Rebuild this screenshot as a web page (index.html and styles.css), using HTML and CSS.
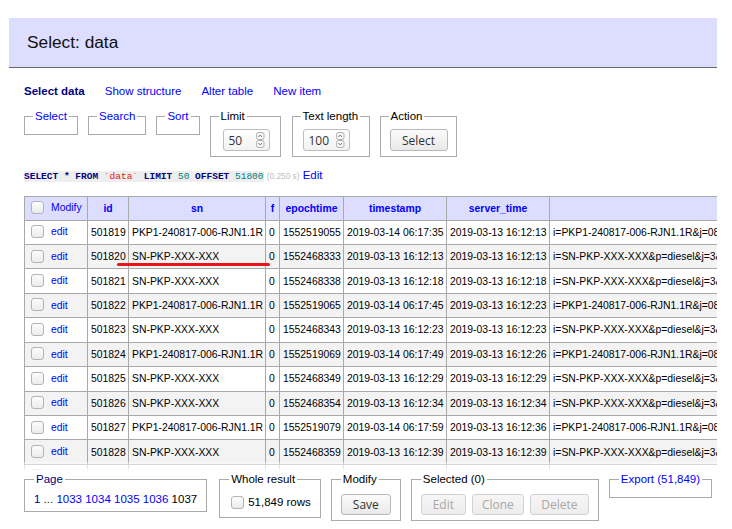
FILE: index.html
```html
<!DOCTYPE html>
<html lang="en">
<head>
<meta charset="utf-8">
<title>Select: data</title>
<link rel="stylesheet" href="styles.css">
</head>
<body>
<h2 class="title">Select: data</h2>
<div class="content">
  <p class="links"><a class="cur" href="#">Select data</a><a href="#">Show structure</a><a href="#">Alter table</a><a href="#">New item</a></p>
  <form class="opts">
    <fieldset class="fs"><legend><a href="#">Select</a></legend></fieldset>
    <fieldset class="fs"><legend><a href="#">Search</a></legend></fieldset>
    <fieldset class="fs"><legend><a href="#">Sort</a></legend></fieldset>
    <fieldset class="fs"><legend>Limit</legend>
      <div class="num"><span>50</span><svg class="spin" width="9" height="16" viewBox="0 0 9 16"><rect x="0.5" y="0.5" width="7.5" height="7" rx="2" class="sb"/><rect x="0.5" y="8.5" width="7.5" height="7" rx="2" class="sb"/><path d="M2.5 5 L4.25 3 L6 5" class="sc"/><path d="M2.5 11 L4.25 13 L6 11" class="sc"/></svg></div>
    </fieldset>
    <fieldset class="fs fs-tl"><legend>Text length</legend>
      <div class="num"><span>100</span><svg class="spin" width="9" height="16" viewBox="0 0 9 16"><rect x="0.5" y="0.5" width="7.5" height="7" rx="2" class="sb"/><rect x="0.5" y="8.5" width="7.5" height="7" rx="2" class="sb"/><path d="M2.5 5 L4.25 3 L6 5" class="sc"/><path d="M2.5 11 L4.25 13 L6 11" class="sc"/></svg></div>
    </fieldset>
    <fieldset class="fs"><legend>Action</legend>
      <button type="button" class="btn w-select">Select</button>
    </fieldset>
  </form>
  <p class="sql"><code><span class="k">SELECT</span> <span class="k">*</span> <span class="k">FROM</span> <span class="b">`data`</span> <span class="k">LIMIT</span> <span class="n">50</span> <span class="k">OFFSET</span> <span class="n">51800</span></code> <span class="time">(0.250 s)</span> <a href="#">Edit</a></p>
</div>

<div class="tablewrap">
  <table class="grid">
    <colgroup>
      <col class="c-mod"><col class="c-id"><col class="c-sn"><col class="c-f"><col class="c-ep"><col class="c-ts"><col class="c-ts"><col class="c-raw">
    </colgroup>
    <thead>
      <tr>
        <td class="sel"><input type="checkbox" class="cb"><a href="#">Modify</a></td>
        <th><a href="#">id</a></th>
        <th><a href="#">sn</a></th>
        <th><a href="#">f</a></th>
        <th><a href="#">epochtime</a></th>
        <th><a href="#">timestamp</a></th>
        <th><a href="#">server_time</a></th>
        <th><a href="#">raw</a></th>
      </tr>
    </thead>
    <tbody>
      <tr><td class="sel"><input type="checkbox" class="cb"><a href="#">edit</a></td><td>501819</td><td>PKP1-240817-006-RJN1.1R</td><td>0</td><td>1552519055</td><td>2019-03-14 06:17:35</td><td>2019-03-13 16:12:13</td><td>i=PKP1-240817-006-RJN1.1R&amp;j=08&amp;k=0.00&amp;l=0.00</td></tr>
      <tr class="odd"><td class="sel"><input type="checkbox" class="cb"><a href="#">edit</a></td><td>501820</td><td>SN-PKP-XXX-XXX</td><td>0</td><td>1552468333</td><td>2019-03-13 16:12:13</td><td>2019-03-13 16:12:13</td><td>i=SN-PKP-XXX-XXX&amp;p=diesel&amp;j=3&amp;k=0.00</td></tr>
      <tr><td class="sel"><input type="checkbox" class="cb"><a href="#">edit</a></td><td>501821</td><td>SN-PKP-XXX-XXX</td><td>0</td><td>1552468338</td><td>2019-03-13 16:12:18</td><td>2019-03-13 16:12:18</td><td>i=SN-PKP-XXX-XXX&amp;p=diesel&amp;j=3&amp;k=0.00</td></tr>
      <tr class="odd"><td class="sel"><input type="checkbox" class="cb"><a href="#">edit</a></td><td>501822</td><td>PKP1-240817-006-RJN1.1R</td><td>0</td><td>1552519065</td><td>2019-03-14 06:17:45</td><td>2019-03-13 16:12:23</td><td>i=PKP1-240817-006-RJN1.1R&amp;j=08&amp;k=0.00&amp;l=0.00</td></tr>
      <tr><td class="sel"><input type="checkbox" class="cb"><a href="#">edit</a></td><td>501823</td><td>SN-PKP-XXX-XXX</td><td>0</td><td>1552468343</td><td>2019-03-13 16:12:23</td><td>2019-03-13 16:12:23</td><td>i=SN-PKP-XXX-XXX&amp;p=diesel&amp;j=3&amp;k=0.00</td></tr>
      <tr class="odd"><td class="sel"><input type="checkbox" class="cb"><a href="#">edit</a></td><td>501824</td><td>PKP1-240817-006-RJN1.1R</td><td>0</td><td>1552519069</td><td>2019-03-14 06:17:49</td><td>2019-03-13 16:12:26</td><td>i=PKP1-240817-006-RJN1.1R&amp;j=08&amp;k=0.00&amp;l=0.00</td></tr>
      <tr><td class="sel"><input type="checkbox" class="cb"><a href="#">edit</a></td><td>501825</td><td>SN-PKP-XXX-XXX</td><td>0</td><td>1552468349</td><td>2019-03-13 16:12:29</td><td>2019-03-13 16:12:29</td><td>i=SN-PKP-XXX-XXX&amp;p=diesel&amp;j=3&amp;k=0.00</td></tr>
      <tr class="odd"><td class="sel"><input type="checkbox" class="cb"><a href="#">edit</a></td><td>501826</td><td>SN-PKP-XXX-XXX</td><td>0</td><td>1552468354</td><td>2019-03-13 16:12:34</td><td>2019-03-13 16:12:34</td><td>i=SN-PKP-XXX-XXX&amp;p=diesel&amp;j=3&amp;k=0.00</td></tr>
      <tr><td class="sel"><input type="checkbox" class="cb"><a href="#">edit</a></td><td>501827</td><td>PKP1-240817-006-RJN1.1R</td><td>0</td><td>1552519079</td><td>2019-03-14 06:17:59</td><td>2019-03-13 16:12:36</td><td>i=PKP1-240817-006-RJN1.1R&amp;j=08&amp;k=0.00&amp;l=0.00</td></tr>
      <tr class="odd"><td class="sel"><input type="checkbox" class="cb"><a href="#">edit</a></td><td>501828</td><td>SN-PKP-XXX-XXX</td><td>0</td><td>1552468359</td><td>2019-03-13 16:12:39</td><td>2019-03-13 16:12:39</td><td>i=SN-PKP-XXX-XXX&amp;p=diesel&amp;j=3&amp;k=0.00</td></tr>
      <tr><td class="sel"><input type="checkbox" class="cb"><a href="#">edit</a></td><td>501829</td><td>SN-PKP-XXX-XXX</td><td>0</td><td>1552468364</td><td>2019-03-13 16:12:44</td><td>2019-03-13 16:12:44</td><td>i=SN-PKP-XXX-XXX&amp;p=diesel&amp;j=3&amp;k=0.00</td></tr>
    </tbody>
  </table>
</div>

<div class="footer">
  <fieldset class="fs ffs"><legend><a class="visited" href="#">Page</a></legend>
    <div class="pages"><a class="visited" href="#">1</a> <span class="ell">...</span> <a href="#">1033</a> <a href="#">1034</a> <a href="#">1035</a> <a href="#">1036</a> 1037</div>
  </fieldset>
  <fieldset class="fs ffs fs-whole"><legend>Whole result</legend>
    <label class="whole"><input type="checkbox" class="cb">51,849 rows</label>
  </fieldset>
  <fieldset class="fs ffs"><legend>Modify</legend>
    <div class="btns"><button type="button" class="btn w-save">Save</button></div>
  </fieldset>
  <fieldset class="fs ffs"><legend>Selected (0)</legend>
    <div class="btns"><button type="button" class="btn w-edit" disabled>Edit</button><button type="button" class="btn w-clone" disabled>Clone</button><button type="button" class="btn w-delete" disabled>Delete</button></div>
  </fieldset>
  <fieldset class="fs ffs"><legend><a href="#">Export (51,849)</a></legend></fieldset>
</div>

<div class="mark"></div>
</body>
</html>
```
FILE: styles.css
```css
* { box-sizing: border-box; }
html, body { margin: 0; }
body {
  height: 529px;
  overflow: hidden;
  display: flex;
  flex-direction: column;
  font: 11.5px/1.25 "Liberation Sans", Arial, sans-serif;
  color: #000;
  background: #fff;
  position: relative;
}
a { color: #0000ff; text-decoration: none; }
a.visited { color: #000080; }

.title {
  flex: none;
  margin: 18px 0 0 9px;
  width: 708px;
  height: 50px;
  padding: 0 0 0 18px;
  display: flex;
  align-items: center;
  background: #ddf;
  border-bottom: 1px solid #666;
  font-size: 17.3px;
  font-weight: normal;
  color: #111;
}

.content { flex: none; padding-left: 24px; }
.links { margin: 16px 0 0; display: flex; gap: 20px; line-height: 14px; }
.links .cur { font-weight: bold; color: #000080; }

.opts { display: flex; gap: 10px; align-items: flex-start; margin: 11px 0 0; }
.fs {
  margin: 0;
  padding: 6px 8px 5px;
  border: 1px solid #aaa;
  min-width: 0;
}
.fs legend { padding: 0 2px; line-height: 14px; }
.fs-tl { width: 78px; margin-left: 1px; }

.num {
  display: flex;
  align-items: center;
  justify-content: space-between;
  width: 47px;
  height: 22px;
  margin: 0 2px 0 4px;
  padding: 0 4px 0 5px;
  border: 1px solid #bdbdbd;
  border-radius: 3px;
  background: linear-gradient(#ffffff, #f2f2f2);
  font: 12px "Open Sans", "DejaVu Sans", sans-serif;
  color: #333;
}
.fs-tl .num { margin-left: 2px; }
.spin { display: block; }
.sb { fill: #f6f6f6; stroke: #b0b0b0; stroke-width: 1; }
.sc { fill: none; stroke: #777; stroke-width: 1; }

.btn {
  display: inline-flex;
  align-items: center;
  justify-content: center;
  height: 22px;
  margin: 0;
  padding: 0;
  border: 1px solid #b8b8b8;
  border-radius: 3px;
  background: linear-gradient(#fbfbfb, #e9e9e9);
  font: 12px "Open Sans", "DejaVu Sans", sans-serif;
  color: #333;
}
.w-select { width: 58px; margin-left: 1px; }
.w-save { width: 50px; }
.w-edit { width: 45px; }
.w-clone { width: 52px; }
.w-delete { width: 59px; }
.btn:disabled { color: #a8a8a8; border-color: #d2d2d2; background: linear-gradient(#f6f6f6, #ededed); }

.sql { margin: 11px 0 0; line-height: 14px; }
.sql code { font: 9.5px "Liberation Mono", monospace; background: #eee; }
.sql .k { color: #000080; font-weight: bold; }
.sql .b { color: #e02020; }
.sql .n { color: #007f7f; }
.time { color: #c0c0c0; font-size: 8.3px; }

.tablewrap {
  flex: 1;
  min-height: 0;
  margin: 12.5px 0 0 24px;
  width: 693px;
  overflow: hidden;
  position: relative;
}
.tablewrap::after {
  content: "";
  position: absolute;
  left: 0; right: 0; bottom: 0;
  height: 10px;
  background: linear-gradient(rgba(255,255,255,0.35), #fff);
}
.grid {
  border-collapse: collapse;
  table-layout: fixed;
  width: 825px;
  font-size: 10.4px;
  line-height: 1.25;
}
.c-mod { width: 63px; }
.c-id { width: 41px; }
.c-sn { width: 137px; }
.c-f { width: 14px; }
.c-ep { width: 64px; }
.c-ts { width: 103px; }
.c-raw { width: 400px; }
.grid td, .grid th {
  border: 1px solid #a9a9a9;
  padding: 0 3px;
  white-space: nowrap;
  overflow: hidden;
  vertical-align: middle;
  text-align: left;
}
.grid thead tr { height: 24px; }
.grid thead td, .grid thead th { background: #ddf; }
.grid th { text-align: center; font-weight: bold; }
.grid tbody tr { height: 24.45px; }
.grid tr.odd td { background: #f3f3f3; }
.grid td.sel { padding-left: 6px; }

.cb {
  -webkit-appearance: none;
  appearance: none;
  display: inline-block;
  width: 13px;
  height: 13px;
  margin: 0 7px 0 0;
  vertical-align: middle;
  border: 1px solid #b3b3b3;
  border-radius: 3px;
  background: linear-gradient(#fdfdfd, #ebebeb);
}
.grid .cb { position: relative; top: -1px; }

.footer {
  flex: none;
  display: flex;
  gap: 10px;
  align-items: flex-start;
  padding: 0 0 8px 24px;
  background: #fff;
}
.ffs { padding-left: 9px; padding-right: 9px; }
.footer .ffs:first-child { margin-right: 2px; }
.pages { line-height: 14.4px; white-space: nowrap; }
.ell { color: #222; }
.whole { display: flex; align-items: center; height: 20px; white-space: nowrap; }
.whole .cb { margin: 0 4px 0 2px; }
.btns { display: flex; gap: 6px; margin-top: 2px; }
.btns .btn { height: 21px; }

.mark {
  position: absolute;
  left: 117px;
  top: 263px;
  width: 153px;
  height: 2.5px;
  border-radius: 1.5px;
  background: #e8141a;
}
```
